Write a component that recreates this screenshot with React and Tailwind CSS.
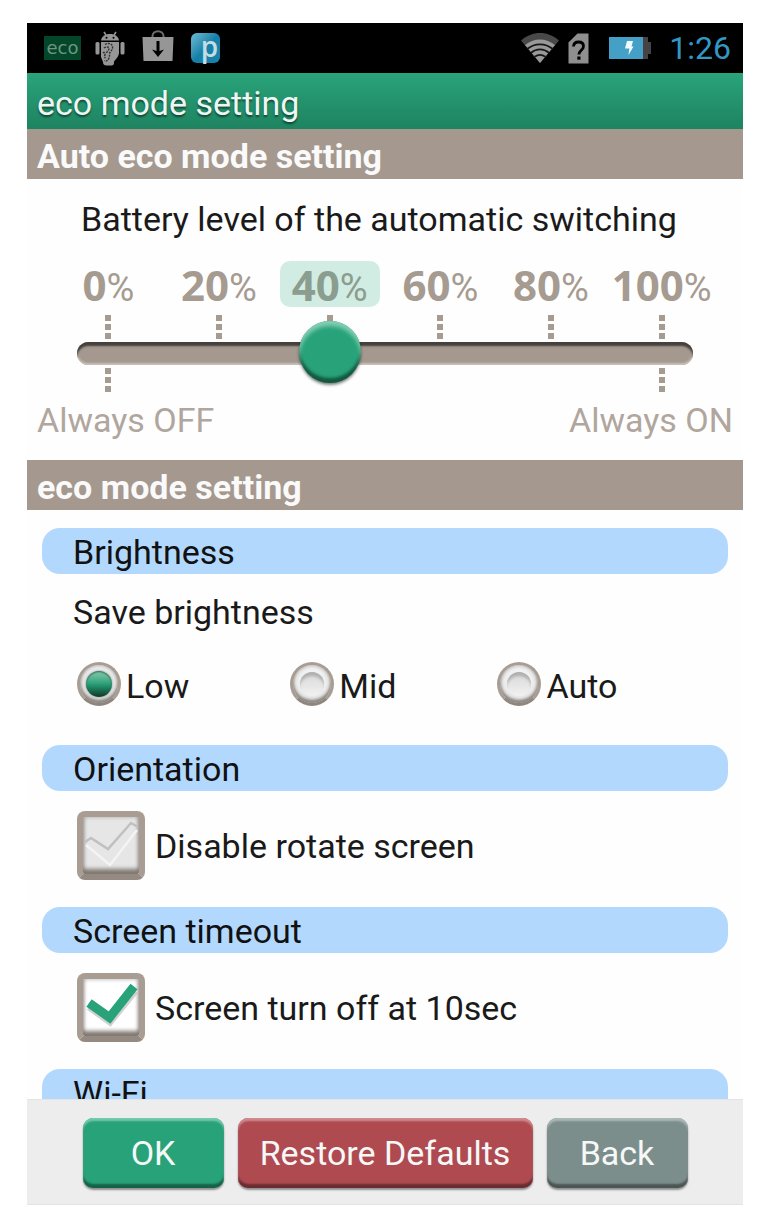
import { useState } from "react";

const LEVELS = [0, 20, 40, 60, 80, 100];

const DASH =
  "block h-6 w-[6px] bg-[repeating-linear-gradient(to_bottom,#a69b91_0_6px,transparent_6px_9px)]";

function AndroidIcon() {
  return (
    <svg viewBox="0 0 30 36" className="h-9 w-[30px]" aria-hidden="true">
      <path d="M9 2l2 3M21 2l-2 3" stroke="#969696" strokeWidth="1.6" />
      <path d="M6 10.500C6.500 6.500 10 4 15 4s8.500 2.500 9 6.500z" fill="#969696" />
      <circle cx="11.500" cy="7.800" r="1" fill="#000" />
      <circle cx="18.500" cy="7.800" r="1" fill="#000" />
      <rect x="0.500" y="12" width="4" height="12.500" rx="1.500" fill="#969696" />
      <rect x="25.500" y="12" width="4" height="12.500" rx="1.500" fill="#969696" />
      <path d="M6 12h18v11c0 3-3 6-5 8.500V33c0 2-1.500 2.500-3.500 2.500h-4C9 35.500 8 34 8 32l-2-5z" fill="#969696" />
      <path d="M10 14.500c3-2 7-1 7.500 2 .5 3-1.500 4.500-2.500 6s0 3-1 5.500-3 4-4.500 2.500M9 18c2-1.500 5-1.500 5 .5s-2.500 3-2.500 5M8 23c1-1 2.500-.5 2 1.500s-.5 3 .5 3.500" fill="none" stroke="#2e2e2e" strokeWidth="1.400" strokeDasharray="2 1" />
    </svg>
  );
}

function BagIcon() {
  return (
    <svg viewBox="0 0 32 34" className="h-[34px] w-8" aria-hidden="true">
      <path d="M10.500 9V7a5.500 4.800 0 0 1 11 0v2" fill="none" stroke="#6c6c6c" strokeWidth="2" />
      <path d="M.5 8h31l-1 24h-29z" fill="#969696" />
      <path d="M16 12v11" stroke="#000" strokeWidth="3" />
      <path d="M10 20.500l6 7.500 6-7.500-6 2z" fill="#000" />
    </svg>
  );
}

function WifiIcon() {
  return (
    <svg viewBox="0 0 40 32" className="h-8 w-10" aria-hidden="true">
      <path d="M20 31L1 8.500C12-1.500 28-1.500 39 8.500z" fill="#484848" />
      <path d="M20 31L5 13c8.500-7.500 21.500-7.500 30 0z" fill="#999" />
      <path d="M7.500 16.800c7-6 18-6 25 0M11 20.800c5.500-4.500 12.500-4.500 18 0M14.600 24.800c3.500-2.500 7.300-2.500 10.800 0" fill="none" stroke="#161616" strokeWidth="1.800" />
    </svg>
  );
}

function SimIcon() {
  return (
    <svg viewBox="0 0 21 31" className="h-[31px] w-[21px]" aria-hidden="true">
      <path d="M9.500 0.500H20.500V30.500H.5V9.500z" fill="#8f8f8f" />
      <path d="M5.500 13.500c.2-3 2.500-4.500 5-4.500 3 0 5 1.600 5 4.200 0 4-4.600 4.200-4.600 8.300" fill="none" stroke="#000" strokeWidth="2.800" />
      <rect x="9.300" y="23.500" width="3.200" height="3.200" fill="#000" />
    </svg>
  );
}

function BatteryIcon() {
  return (
    <svg viewBox="0 0 42 22" className="h-[22px] w-[42px]" aria-hidden="true">
      <path d="M33 0h6v5h3v12h-3v5h-6z" fill="#444" />
      <rect width="34" height="22" fill="#45a0c8" />
      <path d="M18 4h6l-1.500 5.500h2L19.500 18l.8-6.500H16z" fill="#f2fbff" />
    </svg>
  );
}

function StatusBar() {
  return (
    <div className="flex h-[50px] shrink-0 items-center justify-between bg-black pl-[17px] pr-3">
      <div className="flex items-center">
        <span className="mr-[14px] flex h-6 w-[37px] items-center justify-center bg-[#03462a] font-['DejaVu_Sans',sans-serif] text-[18px] leading-none text-[#6f9482]">
          eco
        </span>
        <AndroidIcon />
        <span className="ml-[17px] mb-1 flex">
          <BagIcon />
        </span>
        <span className="ml-[17px] flex h-[30px] w-[29px] items-center justify-center rounded-md bg-linear-to-br from-[#6dbdd6] via-[#1581a8] to-[#1784ab] pb-1 pl-2 font-['Open_Sans',sans-serif] text-[28px] font-semibold leading-none text-[#c6dbe2]">
          p
        </span>
      </div>
      <div className="flex items-center">
        <WifiIcon />
        <span className="ml-2 flex">
          <SimIcon />
        </span>
        <span className="ml-5 mr-[18px] flex">
          <BatteryIcon />
        </span>
        <time className="text-[32px] leading-none text-[#3397c4]">1:26</time>
      </div>
    </div>
  );
}

function SectionHeader({ children }) {
  return (
    <h2 className="h-[50px] bg-[#a5998f] pl-[10px] text-[34px] font-bold leading-[54px] text-[#fafafa]">
      {children}
    </h2>
  );
}

function GroupHeader({ children }) {
  return (
    <h3 className="mx-[15px] h-[46px] rounded-[18px] bg-[#b2d8fe] pl-[31px] leading-[48px] text-[#111]">
      {children}
    </h3>
  );
}

function LevelSlider() {
  const [level, setLevel] = useState(40);
  return (
    <section className="pb-5 pt-5">
      <label htmlFor="level" className="block pl-[54px]">
        Battery level of the automatic switching
      </label>
      <div className="mt-[22px] grid grid-cols-6 justify-items-center px-[26px] text-[#a69b91]">
        {LEVELS.map((n) => (
          <div
            key={n}
            className={
              "flex h-[46px] w-[100px] items-baseline justify-center rounded-[10px] " +
              (n === level ? "bg-[#d1ece2] text-[#8a9d8e]" : "")
            }
          >
            <span className="font-['Open_Sans',sans-serif] text-[42px] font-bold leading-[48px]">{n}</span>
            <span className="text-[38px] leading-[48px]">%</span>
          </div>
        ))}
      </div>
      <div className="mt-2 grid grid-cols-6 justify-items-center px-[26px]">
        {LEVELS.map((n) => (
          <span key={n} className={DASH} />
        ))}
      </div>
      <div className="relative z-10 -mb-4 -mt-[17px] px-[50px]">
        <input
          id="level"
          type="range"
          min="0"
          max="100"
          step="20"
          value={level}
          onChange={(e) => setLevel(Number(e.target.value))}
          className="block h-[62px] w-full appearance-none bg-transparent [&::-webkit-slider-runnable-track]:h-[23px] [&::-webkit-slider-runnable-track]:rounded-full [&::-webkit-slider-runnable-track]:bg-[#a5998f] [&::-webkit-slider-runnable-track]:shadow-[inset_0_4px_2px_#45403c,inset_0_-2px_2px_#c9c1ba] [&::-webkit-slider-thumb]:-mt-[21px] [&::-webkit-slider-thumb]:h-[62px] [&::-webkit-slider-thumb]:w-[62px] [&::-webkit-slider-thumb]:appearance-none [&::-webkit-slider-thumb]:rounded-full [&::-webkit-slider-thumb]:bg-[#28a279] [&::-webkit-slider-thumb]:shadow-[inset_0_5px_4px_#83cfb4,inset_0_-5px_3px_#14583f,0_2px_3px_rgba(0,0,0,0.5)]"
        />
      </div>
      <div className="flex justify-between px-[78px]">
        <span className={DASH} />
        <span className={DASH} />
      </div>
      <div className="mt-2 flex justify-between px-[10px] text-[#b0a69d]">
        <span>Always OFF</span>
        <span>Always ON</span>
      </div>
    </section>
  );
}

function BrightnessRadios() {
  const [value, setValue] = useState("Low");
  return (
    <div role="radiogroup" aria-labelledby="save-brightness" className="pb-[39px] pl-[46px] pt-[18px]">
      <p id="save-brightness">Save brightness</p>
      <div className="mt-[29px] flex gap-[101px] pl-1">
        {["Low", "Mid", "Auto"].map((name) => (
          <label key={name} className="flex h-[45px] items-center gap-[5px]">
            <input
              type="radio"
              name="brightness"
              checked={value === name}
              onChange={() => setValue(name)}
              className="grid h-11 w-11 shrink-0 appearance-none place-items-center rounded-full border-3 border-[#a99d93] border-b-[#8d857e] bg-linear-to-b from-[#f4f4f4] to-[#e6e6e6] shadow-[inset_0_-3px_3px_#8b857f,inset_0_0_4px_#999] before:block before:h-6 before:w-6 before:rounded-full before:bg-linear-to-b before:from-[#d8d8d8] before:to-[#f1f1f1] before:shadow-[inset_0_5px_3px_-1px_#b0b0b0] checked:before:h-[26px] checked:before:w-[26px] checked:before:from-[#84ccb1] checked:before:via-[#28a077] checked:before:to-[#0d3a29] checked:before:shadow-[inset_0_1px_2px_#2d6651,0_0_3px_#888]"
            />
            <span className="pt-1">{name}</span>
          </label>
        ))}
      </div>
    </div>
  );
}

function CheckRow({ label, initial }) {
  const [on, setOn] = useState(initial);
  return (
    <div className="pb-[27px] pl-[50px] pt-5">
      <label className="flex w-fit items-center gap-[10px]">
        <span className="grid h-[69px] w-[68px] shrink-0">
          <input
            type="checkbox"
            checked={on}
            onChange={() => setOn(!on)}
            className="col-start-1 row-start-1 h-full w-full appearance-none rounded-lg border-[6px] border-[#a99d93] border-b-[#948a82] bg-[#e6e6e6] shadow-[inset_0_-5px_4px_#7f7871,inset_0_0_4px_#aaa] checked:bg-white"
          />
          <svg
            viewBox="0 0 68 69"
            className="pointer-events-none col-start-1 row-start-1 h-full w-full"
            aria-hidden="true"
          >
            {on ? (
              <>
                <path d="M12 34l21 15L58 18" fill="none" stroke="#bdbdbd" strokeWidth="7" opacity=".7" />
                <path d="M12 30l20.500 14.500L57 13.500" fill="none" stroke="#28a279" strokeWidth="9" />
              </>
            ) : (
              <>
                <path d="M9 34l24 20 27-35" fill="none" stroke="#f4f4f4" strokeWidth="2.500" />
                <path d="M8 31l6-4 17 11L54 12l7 4" fill="none" stroke="#c0c0c0" strokeWidth="2.500" />
              </>
            )}
          </svg>
        </span>
        <span>{label}</span>
      </label>
    </div>
  );
}

const BUTTON =
  "h-[70px] rounded-[10px] text-[#f5f8f7] leading-[70px]";

export default function App() {
  return (
    <div className="h-dvh bg-white pb-[25px] pl-[27px] pr-[23px] pt-[23px] font-['Roboto',sans-serif] text-[34px] leading-10 text-[#1a1a1a]">
      <main className="flex h-full flex-col bg-[#fefefe]">
        <StatusBar />
        <h1 className="h-14 shrink-0 bg-linear-to-b from-[#29a47b] to-[#1e8360] pl-[10px] leading-[60px] text-[#eef6f3] [text-shadow:0_2px_2px_rgba(0,0,0,0.5)]">
          eco mode setting
        </h1>
        <div className="min-h-0 flex-1 overflow-y-auto [scrollbar-width:none]">
          <SectionHeader>Auto eco mode setting</SectionHeader>
          <LevelSlider />
          <SectionHeader>eco mode setting</SectionHeader>
          <div className="pt-[18px]">
            <GroupHeader>Brightness</GroupHeader>
            <BrightnessRadios />
            <GroupHeader>Orientation</GroupHeader>
            <CheckRow label="Disable rotate screen" initial={false} />
            <GroupHeader>Screen timeout</GroupHeader>
            <CheckRow label="Screen turn off at 10sec" initial={true} />
            <GroupHeader>Wi-Fi</GroupHeader>
          </div>
        </div>
        <footer className="flex h-[106px] shrink-0 justify-center gap-[14px] border-y border-[#e4e4e4] bg-[#ededed] pt-[18px]">
          <button type="button" className={BUTTON + " w-[141px] bg-[#28a279] shadow-[inset_0_3px_2px_#74c9ab,inset_0_-4px_2px_#176149,0_2px_2px_rgba(0,0,0,0.4)]"}>
            OK
          </button>
          <button type="button" className={BUTTON + " w-[295px] bg-[#af4a51] shadow-[inset_0_3px_2px_#cf8b90,inset_0_-4px_2px_#692c31,0_2px_2px_rgba(0,0,0,0.4)]"}>
            Restore Defaults
          </button>
          <button type="button" className={BUTTON + " w-[141px] bg-[#7c8e8c] shadow-[inset_0_3px_2px_#abb8b6,inset_0_-4px_2px_#4b5554,0_2px_2px_rgba(0,0,0,0.4)]"}>
            Back
          </button>
        </footer>
      </main>
    </div>
  );
}
